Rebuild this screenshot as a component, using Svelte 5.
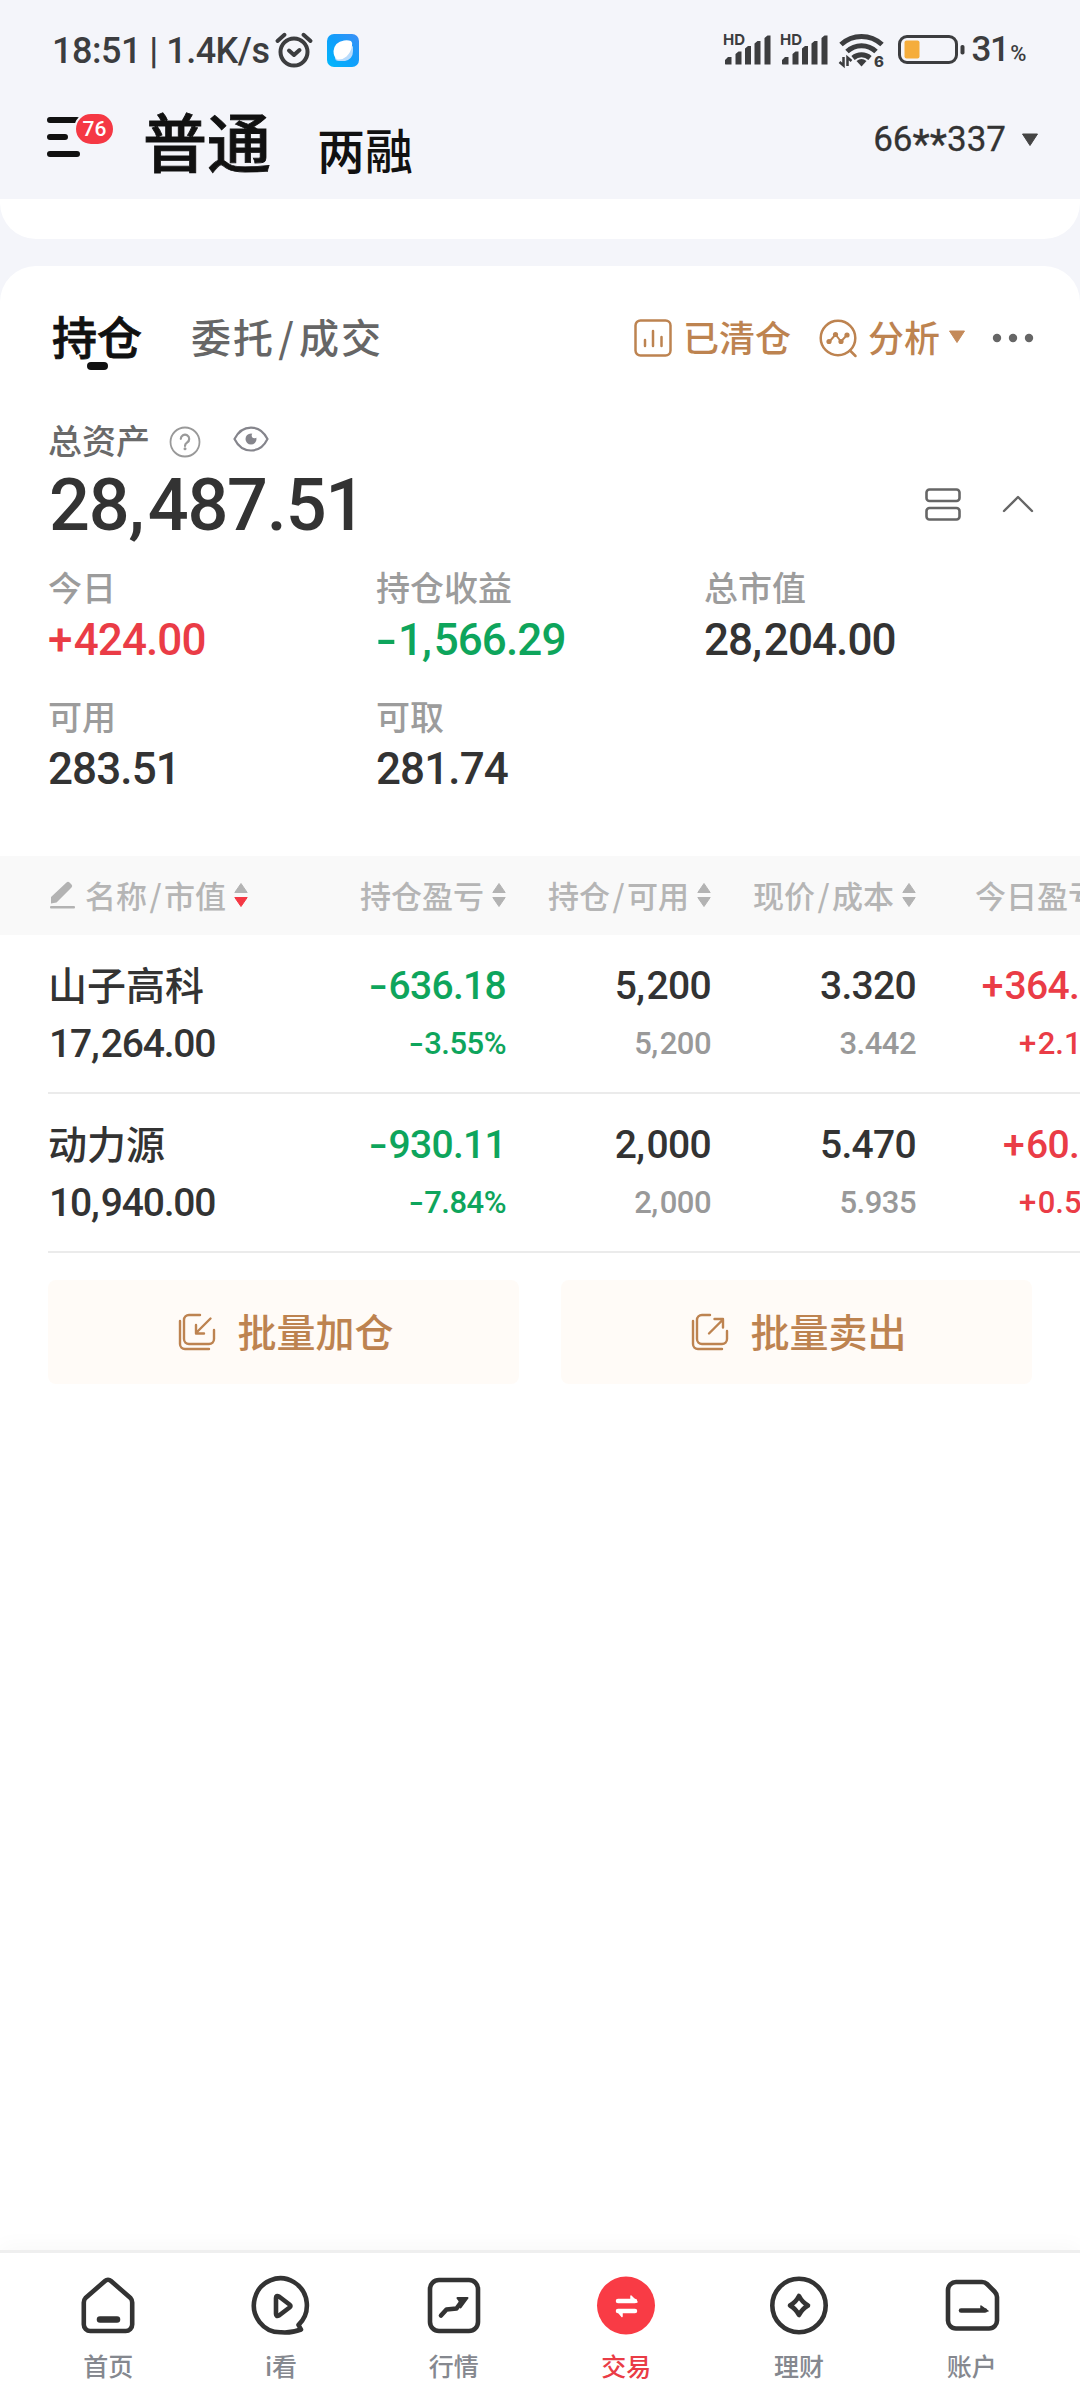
<script>
    const metrics = [
        { label: "今日", value: "+424.00", tone: "up" },
        { label: "持仓收益", value: "-1,566.29", tone: "down" },
        { label: "总市值", value: "28,204.00", tone: "" },
        { label: "可用", value: "283.51", tone: "" },
        { label: "可取", value: "281.74", tone: "" },
    ];

    const columns = ["持仓盈亏", "持仓/可用", "现价/成本", "今日盈亏"];

    const holdings = [
        {
            name: "山子高科",
            amount: "17,264.00",
            cells: [
                { main: "-636.18", sub: "-3.55%", tone: "down" },
                { main: "5,200", sub: "5,200", tone: "" },
                { main: "3.320", sub: "3.442", tone: "" },
                { main: "+364.00", sub: "+2.15%", tone: "up" },
            ],
        },
        {
            name: "动力源",
            amount: "10,940.00",
            cells: [
                { main: "-930.11", sub: "-7.84%", tone: "down" },
                { main: "2,000", sub: "2,000", tone: "" },
                { main: "5.470", sub: "5.935", tone: "" },
                { main: "+60.00", sub: "+0.55%", tone: "up" },
            ],
        },
    ];

    const tabs = [
        { id: "home", label: "首页" },
        { id: "watch", label: "i看" },
        { id: "market", label: "行情" },
        { id: "trade", label: "交易" },
        { id: "wealth", label: "理财" },
        { id: "account", label: "账户" },
    ];

    let activeTab = $state("trade");
</script>

<!-- gives the signs, comma and slash a little more room than the font does -->
{#snippet spaced(text)}
    {#each text.split(/([-+,/])/) as part}{#if part === "-"}<span class="minus">-</span>{:else if part === "+"}<span class="plus">+</span>{:else if part === ","}<span class="comma">,</span>{:else if part === "/"}<span class="slash">/</span>{:else}{part}{/if}{/each}
{/snippet}

{#snippet signal()}
    <svg class="signal" width="48" height="34" viewBox="0 0 48 34">
        <text x="0" y="12" class="hd">HD</text>
        <path
            d="M2 31v-4l3-3h3.500v7.500H2.500zM12.500 31V21l3-2.500h3V31.500h-6zM22 31V15.500l3-2.500h3V31.500h-6zM31.500 31V10.500l3-2.500h3V31.500h-6zM41.500 31V5l3-2.500h3V31.500h-6z"
        />
    </svg>
{/snippet}

{#snippet sorter(active)}
    <svg class="sorter" width="14" height="26" viewBox="0 0 14 26">
        <path d="M7 1.500 13.200 10.500H.8z" fill="#b3b3b3" stroke="#b3b3b3" />
        <path d="M7 24.500 13.200 15.500H.8z" fill={active ? "#f53844" : "#b3b3b3"} stroke={active ? "#f53844" : "#b3b3b3"} />
    </svg>
{/snippet}

<div class="screen">
    <div class="status-bar">
        <span class="clock">18:51 | 1.4K/s</span>
        <svg class="alarm" width="38" height="36" viewBox="0 0 38 36" fill="none" stroke="#3c3d3f">
            <circle cx="19" cy="20" r="13.500" stroke-width="4" />
            <path d="M2.500 9 9.500 2.800M35.500 9 28.500 2.800" stroke-width="4" stroke-linecap="round" />
            <path d="M14 18.500 19 23l5.500-5" stroke-width="4" stroke-linecap="round" stroke-linejoin="round" />
        </svg>
        <svg class="app-badge" width="32" height="33" viewBox="0 0 32 33">
            <defs>
                <linearGradient id="blue" x1="0" y1="1" x2="1" y2="0">
                    <stop offset="0" stop-color="#00b8fb" />
                    <stop offset=".5" stop-color="#109ffb" />
                    <stop offset="1" stop-color="#3d8ff6" />
                </linearGradient>
            </defs>
            <rect width="32" height="33" rx="7" fill="url(#blue)" />
            <path d="M8 23.500Q8 27 12 27h6q8-2 8-10V12z" fill="#b9dcfc" />
            <path d="M17 6.500q4-.5 7 .5 1.800 1.500 1 5-1 6-5.500 10.500-4 3.500-9 3-4-2-4-8.500 1-9 10.500-10.500z" fill="#fff" />
        </svg>

        <div class="status-right">
            {@render signal()}
            {@render signal()}
            <svg class="wifi" width="45" height="36" viewBox="0 0 45 36">
                <g fill="none" stroke="#3c3d3f" stroke-width="5">
                    <path d="M2 12.500a30 30 0 0 1 41 0" />
                    <path d="M8 19.500a21 21 0 0 1 29 0" />
                    <path d="M14 26a13 13 0 0 1 17 0" />
                </g>
                <path d="M17.500 29q5-4 10 0L22.500 34.500z" fill="#3c3d3f" />
                <path d="M4.500 25v8.500L.5 30M8.500 34v-8.500l4 3.500" fill="none" stroke="#3c3d3f" stroke-width="2.500" />
                <text x="35" y="34.500" class="wifi-gen">6</text>
            </svg>
            <svg class="battery" width="67" height="30" viewBox="0 0 67 30">
                <rect x="1.500" y="1.500" width="57" height="26" rx="7.500" fill="none" stroke="#3c3d3f" stroke-width="3" />
                <rect x="6.500" y="5.500" width="15" height="18" rx="2" fill="#f5ad3c" />
                <rect x="62.500" y="10" width="4" height="9.500" rx="1.800" fill="#3c3d3f" />
            </svg>
            <span class="charge">31<small>%</small></span>
        </div>
    </div>

    <header class="header">
        <div class="menu">
            <svg width="36" height="44" viewBox="0 0 36 44" stroke="#111" stroke-width="6" stroke-linecap="round">
                <path d="M3 5h27M3 22h15M3 39h27" />
            </svg>
            <span class="count">76</span>
        </div>
        <div class="modes">
            <span class="mode current">普通</span>
            <span class="mode">两融</span>
        </div>
        <div class="user">
            <span>66<i>**</i>337</span>
            <svg width="18" height="14" viewBox="0 0 18 14"><path d="M1.500 1h15L9 12.500z" fill="#444" stroke="#444" stroke-linejoin="round" /></svg>
        </div>
    </header>

    <div class="prev-card"></div>

    <main class="card">
        <div class="tabs">
            <span class="tab selected">持仓</span>
            <span class="tab other">{@render spaced("委托/成交")}</span>
            <div class="tools">
                <svg width="38" height="38" viewBox="0 0 38 38" fill="none" stroke="#bd8350" stroke-width="2.500" stroke-linecap="round">
                    <rect x="1.500" y="1.500" width="35" height="35" rx="5" />
                    <path d="M11 21v6M19 12v15M27.500 18v9" />
                </svg>
                <span class="tool-label cleared">已清仓</span>
                <svg width="38" height="38" viewBox="0 0 38 38" fill="none" stroke="#bd8350" stroke-width="2.500" stroke-linecap="round">
                    <circle cx="19" cy="19" r="17.300" />
                    <path d="M31 31.500 36.500 37" />
                    <path d="M10.500 22.500 16.500 15.500 22 22.500 28 16" stroke-width="2" />
                    <g fill="#bd8350" stroke="none">
                        <circle cx="10" cy="22.500" r="2.600" />
                        <circle cx="16.500" cy="15.500" r="2.600" />
                        <circle cx="22" cy="22.500" r="2.600" />
                        <circle cx="28" cy="16" r="2.600" />
                    </g>
                </svg>
                <span class="tool-label">分析</span>
                <svg class="drop" width="18" height="14" viewBox="0 0 18 14"><path d="M1.500 1h15L9 12.500z" fill="#c48a5a" stroke="#c48a5a" stroke-linejoin="round" /></svg>
                <svg class="dots" width="42" height="10" viewBox="0 0 42 10" fill="#666">
                    <circle cx="5" cy="5" r="4.200" />
                    <circle cx="21" cy="5" r="4.200" />
                    <circle cx="37" cy="5" r="4.200" />
                </svg>
            </div>
        </div>

        <div class="total-label">
            <span>总资产</span>
            <svg class="help" width="32" height="32" viewBox="0 0 32 32" fill="none" stroke="#999" stroke-width="1.800">
                <circle cx="16" cy="16" r="14.500" />
                <path d="M11.800 12.800a4.200 4.200 0 1 1 6.300 3.700c-1.500.9-2.100 1.600-2.100 3.500" stroke-width="2.200" stroke-linecap="round" />
                <circle cx="16" cy="22.800" r="1.500" fill="#999" stroke="none" />
            </svg>
            <svg class="eye" width="36" height="26" viewBox="0 0 36 26">
                <path d="M1.500 13C9-2.300 27-2.300 34.500 13 27 28.300 9 28.300 1.500 13z" fill="none" stroke="#85858c" stroke-width="2.200" stroke-linejoin="round" />
                <circle cx="18" cy="13" r="5.500" fill="#85858c" />
                <circle cx="21.500" cy="9.500" r="2.800" fill="#fff" />
            </svg>
        </div>

        <div class="total-row">
            <span class="total">{@render spaced("28,487.51")}</span>
            <svg class="layout" width="36" height="33" viewBox="0 0 36 33" fill="none" stroke="#666" stroke-width="2.600">
                <rect x="1.500" y="1.500" width="33" height="11.500" rx="3" />
                <rect x="1.500" y="20" width="33" height="11.500" rx="3" />
            </svg>
            <svg class="fold" width="32" height="18" viewBox="0 0 32 18" fill="none" stroke="#666" stroke-width="2.400" stroke-linecap="round" stroke-linejoin="round">
                <path d="M2 16 16 2l14 14" />
            </svg>
        </div>

        <div class="metrics">
            {#each metrics as item}
                <div class="metric">
                    <div class="metric-label">{item.label}</div>
                    <div class="metric-value {item.tone}">{@render spaced(item.value)}</div>
                </div>
            {/each}
        </div>

        <div class="table">
            <div class="row head">
                <div class="head-cell first">
                    <svg class="pencil" width="26" height="28" viewBox="0 0 26 28" fill="#b3b3b3">
                        <path d="M1 22.500V16L16.500 1.500q1.500-1.500 3 0l2 2q1.500 1.500 0 3L6.500 21.500z" />
                        <rect x="0" y="25" width="25" height="2.600" rx="1" />
                    </svg>
                    <span>{@render spaced("名称/市值")}</span>
                    {@render sorter(true)}
                </div>
                {#each columns as column}
                    <div class="head-cell">
                        <span>{@render spaced(column)}</span>
                        {@render sorter(false)}
                    </div>
                {/each}
            </div>
            {#each holdings as stock}
                <div class="row">
                    <div class="cell first">
                        <div class="name">{stock.name}</div>
                        <div class="amount">{@render spaced(stock.amount)}</div>
                    </div>
                    {#each stock.cells as cell}
                        <div class="cell {cell.tone}">
                            <div class="main">{@render spaced(cell.main)}</div>
                            <div class="sub">{@render spaced(cell.sub)}</div>
                        </div>
                    {/each}
                </div>
            {/each}
        </div>

        <div class="actions">
            <button class="action">
                <svg width="38" height="38" viewBox="0 0 38 38" fill="none" stroke="#bd8350" stroke-width="2.400" stroke-linecap="round" stroke-linejoin="round">
                    <path d="M22 2H11a5 5 0 0 0-5 5v19a5 5 0 0 0 5 5h20a5 5 0 0 0 5-5v-9" />
                    <path d="M2 8v23a5 5 0 0 0 5 5h24" />
                    <path d="M32.500 5.500 18 20M18 12v8.500h8" />
                </svg>
                <span>批量加仓</span>
            </button>
            <button class="action">
                <svg width="38" height="38" viewBox="0 0 38 38" fill="none" stroke="#bd8350" stroke-width="2.400" stroke-linecap="round" stroke-linejoin="round">
                    <path d="M19 2h-8a5 5 0 0 0-5 5v19a5 5 0 0 0 5 5h20a5 5 0 0 0 5-5v-8" />
                    <path d="M2 8v23a5 5 0 0 0 5 5h24" />
                    <path d="M18 20.500 32 6.500M23.500 6h8.500v8.500" />
                </svg>
                <span>批量卖出</span>
            </button>
        </div>
    </main>

    <nav class="tabbar">
        {#each tabs as tab}
            <button class="tab-item" class:active={activeTab === tab.id} onclick={() => (activeTab = tab.id)}>
                <svg width="60" height="60" viewBox="0 0 60 60" fill="none" stroke="#333" stroke-width="4.600" stroke-linejoin="round" stroke-linecap="round">
                    {#if tab.id === "home"}
                        <path d="M27 5a4.500 4.500 0 0 1 6 0L52.500 22q1.700 1.800 1.700 4.500V48.500a6.500 6.500 0 0 1-6.500 6.500H12.300a6.500 6.500 0 0 1-6.500-6.500V26.500q0-2.700 1.700-4.500z" />
                        <path d="M22 43.500h17" stroke-width="6.500" />
                    {:else if tab.id === "watch"}
                        <path d="M47.500 49A26.500 27 0 1 0 30 56.300q11 .8 20-2.800l-2.500-4.500z" />
                        <path d="M25 22v16q0 3 3 1.500l10.500-8q2-1.500 0-3L28 20.500q-3-1.500-3 1.500z" />
                    {:else if tab.id === "market"}
                        <rect x="6" y="4" width="48" height="51" rx="9" />
                        <path d="M17 39.500 22.500 33.500l10-1L38 25" />
                        <path d="M33.500 22h10l-7 9.500q1-5-3-9.500z" fill="#333" stroke-width="2" />
                    {:else if tab.id === "trade"}
                        <circle cx="30" cy="29.500" r="29" fill="#f93b45" stroke="none" />
                        <path d="M22 25h17M22 35h17" stroke="#fff" stroke-width="4.500" />
                        <path d="M35 20v6h6zM26 40.500v-6h-5z" fill="#fff" stroke="#fff" stroke-width="1.500" />
                    {:else if tab.id === "wealth"}
                        <circle cx="30" cy="29.500" r="26.700" />
                        <path d="M30 20q3 6 9 9.500-6 3.500-9 9.500-3-6-9-9.500 6-3.500 9-9.500z" />
                    {:else}
                        <path d="M14 6h26q3 0 5 2l7.500 7.500q2.500 2.500 2.500 5.500v23a8 8 0 0 1-8 8.500H14a8 8 0 0 1-8-8.500V14a8 8 0 0 1 8-8z" />
                        <path d="M19 34.500h24" stroke-width="4.500" />
                        <path d="M39 30v5h7z" fill="#333" stroke-width="1.500" />
                    {/if}
                </svg>
                <span>{tab.label}</span>
            </button>
        {/each}
    </nav>
</div>

<style>
    :global(body) {
        background: #f4f5fa;
    }

    .screen {
        width: 1080px;
        height: 2400px;
        display: flex;
        flex-direction: column;
        overflow: hidden;
        background: #f4f5fa;
        color: #333;
        font-family: "Noto Sans CJK SC", "Noto Sans", sans-serif;
    }

    button {
        border: none;
        background: none;
        padding: 0;
        font-family: inherit;
    }

    svg {
        flex: none;
        display: block;
        overflow: visible;
    }

    .minus {
        display: inline-block;
        margin-right: 0.18em;
        transform: scaleX(1.4);
        transform-origin: left;
    }

    .plus {
        margin-right: 0.05em;
    }

    .comma {
        margin-right: 0.06em;
    }

    .slash {
        margin: 0 0.08em;
    }

    .status-bar {
        height: 100px;
        padding: 0 55px 0 52px;
        display: flex;
        align-items: center;
        color: #3c3d3f;
        font: 500 36px/40px Roboto, sans-serif;
    }

    .clock {
        width: 223px;
        padding-top: 2px;
        letter-spacing: -0.5px;
        white-space: nowrap;
    }

    .app-badge {
        margin-left: 14px;
    }

    .status-right {
        margin-left: auto;
        display: flex;
        align-items: center;
    }

    .signal {
        margin-right: 9px;
        fill: #3c3d3f;
    }

    .hd {
        font: 700 15px Inter, sans-serif;
    }

    .wifi {
        margin-left: 2px;
    }

    .wifi-gen {
        font: 800 15px Inter, sans-serif;
        fill: #3c3d3f;
    }

    .battery {
        margin: 0 7px 0 14px;
    }

    .charge {
        padding-top: 3px;
        font-size: 35px;
        letter-spacing: -1.5px;
    }

    .charge small {
        margin-left: 2px;
        font-size: 22px;
    }

    .header {
        height: 99px;
        padding: 0 41px 0 47px;
        display: flex;
        align-items: center;
        color: #111;
    }

    .menu {
        position: relative;
        width: 96px;
        height: 44px;
        margin-top: -26px;
    }

    .count {
        position: absolute;
        left: 27px;
        top: -3px;
        width: 37px;
        height: 30px;
        border: 2px solid #f4f5fa;
        border-radius: 17px;
        background: #f53844;
        color: #fff;
        font: 500 21px/31px Roboto, sans-serif;
        text-align: center;
    }

    .modes {
        display: flex;
        align-items: flex-end;
        gap: 46px;
        margin-top: -21px;
    }

    .mode {
        font-size: 48px;
        line-height: 62px;
        font-weight: 500;
    }

    .mode.current {
        font-size: 64px;
        line-height: 80px;
        -webkit-text-stroke: 0.8px #111;
    }

    .user {
        margin-left: auto;
        margin-top: -20px;
        display: flex;
        align-items: center;
        gap: 15px;
        color: #333;
        font: 400 35px/40px Roboto, sans-serif;
        -webkit-text-stroke: 0.3px #333;
    }

    .user i {
        font-size: 40px;
        font-style: normal;
        line-height: 30px;
        vertical-align: -7px;
    }

    .prev-card {
        height: 40px;
        margin-bottom: 27px;
        background: #fff;
        border-radius: 0 0 36px 36px;
    }

    .card {
        flex: 1;
        background: #fff;
        border-radius: 36px 36px 0 0;
        overflow: hidden;
    }

    .tabs {
        height: 144px;
        padding: 0 46px 0 52px;
        display: flex;
        align-items: center;
    }

    .tab {
        position: relative;
        margin-top: -5px;
        font-size: 45px;
        line-height: 60px;
        font-weight: 500;
        color: #111;
    }

    .tab.selected {
        -webkit-text-stroke: 0.8px #111;
    }

    .tab.selected::after {
        content: "";
        position: absolute;
        left: 35px;
        bottom: -4px;
        width: 21px;
        height: 8px;
        border-radius: 4px;
        background: #111;
    }

    .tab.other {
        margin-left: 49px;
        font-size: 40px;
        letter-spacing: 2px;
        color: #666;
    }

    .tools {
        margin-left: auto;
        display: flex;
        align-items: center;
        color: #bd8350;
    }

    .tool-label {
        margin: -5px 0 0 11px;
        font-size: 36px;
        line-height: 40px;
        font-weight: 500;
    }

    .tool-label.cleared {
        margin-right: 28px;
    }

    .drop {
        margin: -2px 26px 0 8px;
    }

    .total-label {
        height: 58px;
        padding: 1px 0 0 48px;
        box-sizing: border-box;
        display: flex;
        align-items: center;
        font-size: 34px;
        line-height: 40px;
        font-weight: 500;
        color: #6a6a6a;
    }

    .help {
        margin: 5px 0 0 19px;
    }

    .eye {
        margin: -2px 0 0 32px;
    }

    .total-row {
        height: 72px;
        padding: 0 46px 0 49px;
        display: flex;
        align-items: center;
    }

    .total {
        flex: 1;
        padding-top: 4px;
        font: 500 72px/72px Roboto, sans-serif;
        letter-spacing: -1.2px;
    }

    .fold {
        margin-left: 41px;
    }

    .metrics {
        margin-top: 22px;
        padding-left: 48px;
        display: grid;
        grid-template-columns: repeat(3, 328px);
        row-gap: 26px;
    }

    .metric-label {
        font-size: 34px;
        line-height: 50px;
        font-weight: 500;
        color: #9c9c9c;
    }

    .metric-value {
        padding-top: 3px;
        font: 500 44px/50px Roboto, sans-serif;
        letter-spacing: -0.9px;
    }

    .up {
        color: #ea3c46;
    }

    .down {
        color: #0ea55c;
    }

    .table {
        margin-top: 62px;
    }

    .row {
        display: grid;
        grid-template-columns: 255px repeat(3, 205px) 206px;
        height: 159px;
        margin-left: 48px;
        box-sizing: border-box;
        border-bottom: 2px solid #ebebeb;
    }

    .row.head {
        grid-template-columns: 255px repeat(4, 205px);
        height: 79px;
        margin-left: 0;
        padding: 0 0 2px 48px;
        border-bottom: none;
        background: #f9f9f9;
    }

    .head-cell {
        display: flex;
        align-items: center;
        justify-content: flex-end;
        padding-right: 2px;
        font-size: 31px;
        line-height: 40px;
        font-weight: 500;
        color: #b5b5b5;
        white-space: nowrap;
    }

    .head-cell.first {
        justify-content: flex-start;
        padding-left: 2px;
    }

    .pencil {
        margin-right: 9px;
    }

    .sorter {
        margin-left: 8px;
    }

    .cell {
        padding: 25px 2px 0 0;
        text-align: right;
    }

    .cell.first {
        padding-top: 23px;
        text-align: left;
    }

    .name {
        font-size: 39px;
        line-height: 50px;
        font-weight: 500;
    }

    .main {
        font: 500 39px/52px Roboto, sans-serif;
        letter-spacing: -0.7px;
    }

    .amount {
        padding: 10px 0 0 1px;
        font: 500 39px/52px Roboto, sans-serif;
        letter-spacing: -1.2px;
    }

    .sub {
        padding-top: 6px;
        font: 500 31px/52px Roboto, sans-serif;
        letter-spacing: -0.5px;
        color: #999;
    }

    .up .sub,
    .down .sub {
        color: inherit;
    }

    .up .sub {
        letter-spacing: 0;
    }

    .actions {
        display: grid;
        grid-template-columns: 1fr 1fr;
        gap: 42px;
        padding: 27px 48px 0;
    }

    .action {
        height: 104px;
        padding: 0 0 0 5px;
        display: flex;
        align-items: center;
        justify-content: center;
        gap: 21px;
        border-radius: 8px;
        background: #fffbf7;
        color: #bd8350;
        font-size: 39px;
        font-weight: 500;
        line-height: 50px;
    }

    .action span {
        margin-top: -5px;
    }

    .tabbar {
        height: 147px;
        padding: 0 22px;
        display: flex;
        border-top: 3px solid #efefef;
        background: #fff;
        box-shadow: 0 -4px 20px rgba(0, 0, 0, 0.03);
    }

    .tab-item {
        flex: 1;
        display: flex;
        flex-direction: column;
        align-items: center;
        padding-top: 23px;
        gap: 13px;
        font-size: 25px;
        line-height: 32px;
        font-weight: 500;
        color: #85888f;
    }

    .tab-item.active {
        color: #ea3c46;
    }
</style>
